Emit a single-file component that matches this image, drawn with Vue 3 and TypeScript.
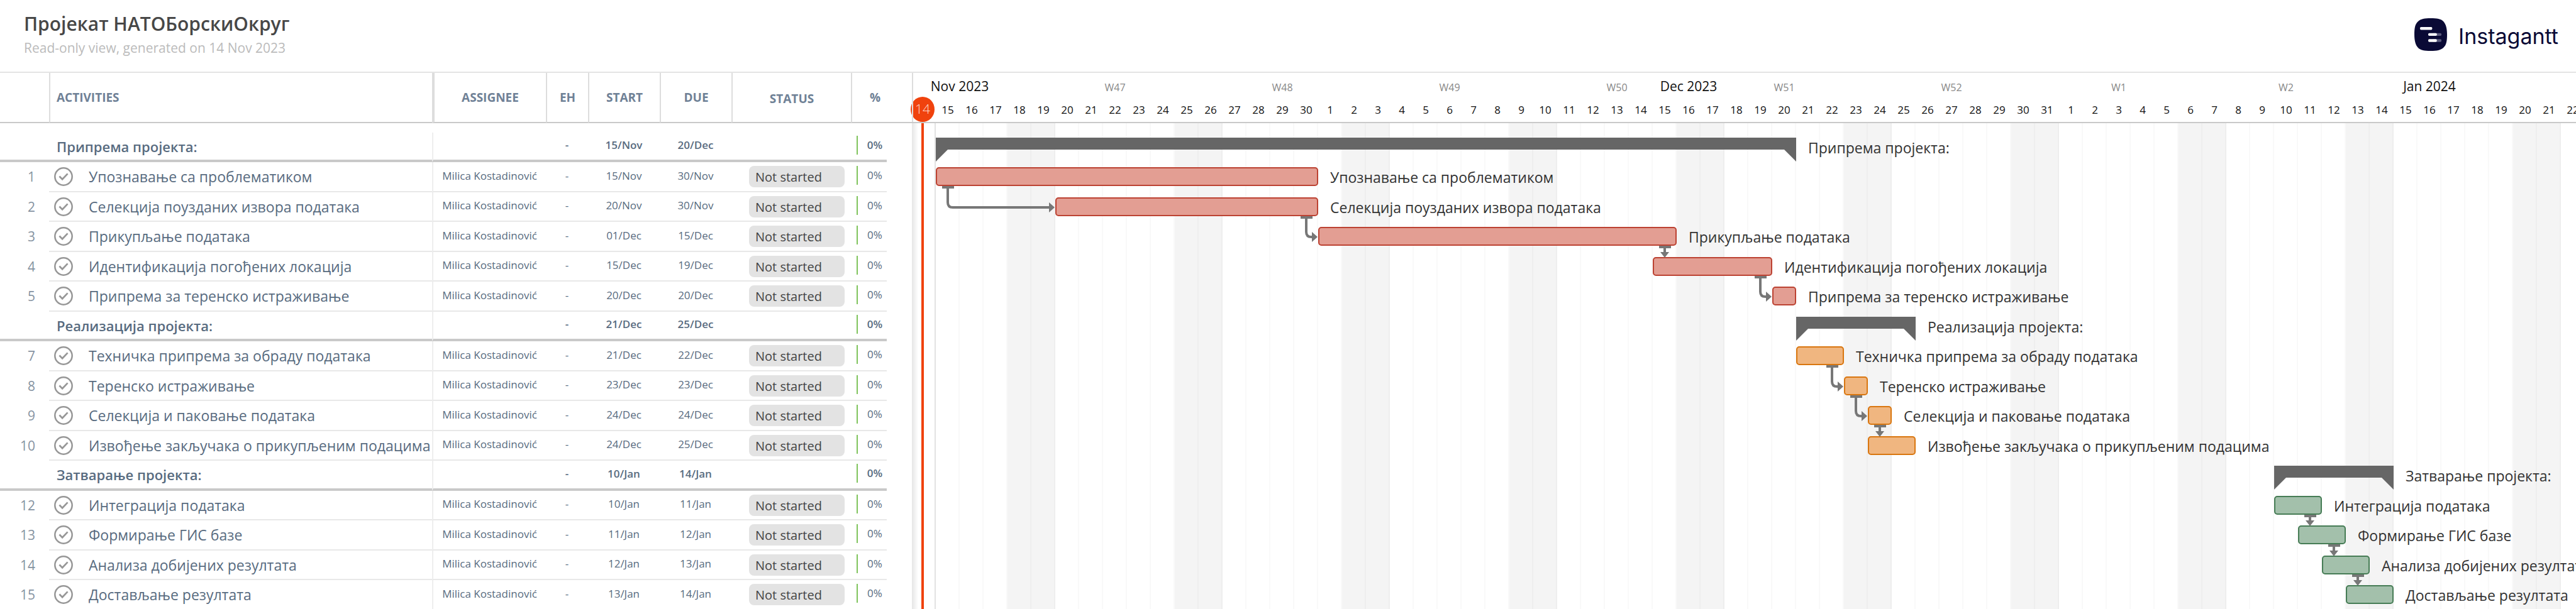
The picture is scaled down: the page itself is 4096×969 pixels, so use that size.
<script setup lang="ts">
type Tone = 'red' | 'orange' | 'green'

interface Row {
  num?: number
  name: string
  start: string
  due: string
  /** first day, counted from 14 Nov */
  from: number
  /** length in days */
  days: number
  tone?: Tone
}

interface Link {
  row: number
  day: number
  /** day the arrow runs to; left out when it drops straight down */
  to?: number
}

const DAY = 38
const ASSIGNEE = 'Milica Kostadinović'

const rows: Row[] = [
  { name: 'Припрема пројекта:', start: '15/Nov', due: '20/Dec', from: 1, days: 36 },
  { num: 1, name: 'Упознавање са проблематиком', start: '15/Nov', due: '30/Nov', from: 1, days: 16, tone: 'red' },
  { num: 2, name: 'Селекција поузданих извора података', start: '20/Nov', due: '30/Nov', from: 6, days: 11, tone: 'red' },
  { num: 3, name: 'Прикупљање података', start: '01/Dec', due: '15/Dec', from: 17, days: 15, tone: 'red' },
  { num: 4, name: 'Идентификација погођених локација', start: '15/Dec', due: '19/Dec', from: 31, days: 5, tone: 'red' },
  { num: 5, name: 'Припрема за теренско истраживање', start: '20/Dec', due: '20/Dec', from: 36, days: 1, tone: 'red' },
  { name: 'Реализација пројекта:', start: '21/Dec', due: '25/Dec', from: 37, days: 5 },
  { num: 7, name: 'Техничка припрема за обраду података', start: '21/Dec', due: '22/Dec', from: 37, days: 2, tone: 'orange' },
  { num: 8, name: 'Теренско истраживање', start: '23/Dec', due: '23/Dec', from: 39, days: 1, tone: 'orange' },
  { num: 9, name: 'Селекција и паковање података', start: '24/Dec', due: '24/Dec', from: 40, days: 1, tone: 'orange' },
  { num: 10, name: 'Извођење закључака о прикупљеним подацима', start: '24/Dec', due: '25/Dec', from: 40, days: 2, tone: 'orange' },
  { name: 'Затварање пројекта:', start: '10/Jan', due: '14/Jan', from: 57, days: 5 },
  { num: 12, name: 'Интеграција података', start: '10/Jan', due: '11/Jan', from: 57, days: 2, tone: 'green' },
  { num: 13, name: 'Формирање ГИС базе', start: '11/Jan', due: '12/Jan', from: 58, days: 2, tone: 'green' },
  { num: 14, name: 'Анализа добијених резултата', start: '12/Jan', due: '13/Jan', from: 59, days: 2, tone: 'green' },
  { num: 15, name: 'Достављање резултата', start: '13/Jan', due: '14/Jan', from: 60, days: 2, tone: 'green' },
]

const links: Link[] = [
  { row: 1, day: 1, to: 6 },
  { row: 2, day: 16, to: 17 },
  { row: 3, day: 31 },
  { row: 4, day: 35, to: 36 },
  { row: 7, day: 38, to: 39 },
  { row: 8, day: 39, to: 40 },
  { row: 9, day: 40 },
  { row: 12, day: 58 },
  { row: 13, day: 59 },
  { row: 14, day: 60 },
]

const days = Array.from({ length: 70 }, (_, i) => {
  const d = new Date(Date.UTC(2023, 10, 14 + i))
  return { index: i, date: d.getUTCDate(), weekend: d.getUTCDay() % 6 === 0 }
})

const months = [
  { label: 'Nov 2023', column: '1 / span 4' },
  { label: 'Dec 2023', column: '32 / span 3' },
  { label: 'Jan 2024', column: '63 / span 3' },
]

const weeks = ['W47', 'W48', 'W49', 'W50', 'W51', 'W52', 'W1', 'W2'].map((label, i) => ({
  label,
  column: `${8 + i * 7} / span 3`,
}))

// Rows alternate between 47px and 48px.
const rowTop = (i: number) => Math.floor(i / 2) * 95 + (i % 2) * 47

function linkShape(l: Link) {
  const x = l.day * DAY + 19
  const y = rowTop(l.row) + 38
  const next = rowTop(l.row + 1) + 8
  const base = `M${x - 9} ${y}h19v4h-19z`
  if (l.to === undefined) {
    return { line: `M${x} ${y}V${next - 6}`, solid: `${base}M${x - 7} ${next - 8}h14l-7 9z` }
  }
  const end = l.to * DAY - 2
  const mid = next + 16
  return {
    line: `M${x} ${y}V${mid - 8}Q${x} ${mid} ${x + 8} ${mid}H${end - 6}`,
    solid: `${base}M${end - 8} ${mid - 8}l9 8l-9 8z`,
  }
}
</script>

<template>
  <div class="app">
    <header class="top">
      <div>
        <h1>Пројекат НАТОБорскиОкруг</h1>
        <p>Read-only view, generated on 14 Nov 2023</p>
      </div>
      <a class="brand" href="#">
        <svg viewBox="0 0 55 55" aria-hidden="true">
          <path d="M27.500 0C38 0 45 1 49 5.500S55 17 55 27.500 54 45 49 49.500 38 55 27.500 55 10 54 6 49.500 0 38 0 27.500 1 10 6 5.500 17 0 27.500 0z" fill="#0a0a35" />
          <rect x="9.500" y="14.700" width="20.500" height="4.800" rx="1.800" fill="#fff" />
          <rect x="30" y="25" width="15.500" height="4.600" rx="1.800" fill="#5a5a7c" />
          <rect x="23.300" y="25" width="14.500" height="4.600" rx="1.800" fill="#fff" />
          <rect x="30" y="35.200" width="15.500" height="4.600" rx="1.800" fill="#5a5a7c" />
          <rect x="23.300" y="35.200" width="14.500" height="4.600" rx="1.800" fill="#fff" />
        </svg>
        <span>Instagantt</span>
      </a>
    </header>

    <main class="board">
      <table class="grid">
        <colgroup>
          <col class="c-num" /><col class="c-name" /><col class="c-who" /><col class="c-eh" />
          <col class="c-date" /><col class="c-date" /><col class="c-status" /><col class="c-pct" /><col />
        </colgroup>
        <thead>
          <tr>
            <th></th>
            <th class="h-name">ACTIVITIES</th>
            <th class="h-who">ASSIGNEE</th>
            <th>EH</th>
            <th>START</th>
            <th>DUE</th>
            <th class="h-status">STATUS</th>
            <th class="h-pct">%</th>
            <th class="h-end"></th>
          </tr>
        </thead>
        <tbody>
          <tr v-for="(r, i) in rows" :key="i" :class="{ section: !r.num }">
            <td class="num">{{ r.num }}</td>
            <td class="name">
              <div class="task">
                <button v-if="r.num" type="button" class="tick" :aria-label="'Complete: ' + r.name">
                  <svg viewBox="0 0 32 32" fill="none" stroke="#979797" aria-hidden="true">
                    <circle cx="16" cy="16" r="14.600" stroke-width="2.700" />
                    <path d="M9 15.500l5 5 9-9.500" stroke-width="2.900" />
                  </svg>
                </button>
                <span>{{ r.name }}</span>
              </div>
            </td>
            <td class="small who">{{ r.num ? ASSIGNEE : '' }}</td>
            <td class="small">-</td>
            <td class="small">{{ r.start }}</td>
            <td class="small">{{ r.due }}</td>
            <td class="status"><span v-if="r.num" class="pill">Not started</span></td>
            <td class="pct"><div class="progress">0%</div></td>
            <td class="end"></td>
          </tr>
        </tbody>
      </table>

      <section class="chart">
        <div class="scale">
          <div class="periods">
            <span v-for="m in months" :key="m.label" class="month" :style="{ gridColumn: m.column }">{{ m.label }}</span>
            <span v-for="w in weeks" :key="w.label" class="week" :style="{ gridColumn: w.column }">{{ w.label }}</span>
          </div>
          <div class="dates">
            <span v-for="d in days" :key="d.index" :class="{ today: d.index === 0 }">{{ d.date }}</span>
          </div>
        </div>
        <div class="canvas">
          <div class="stripes">
            <i v-for="d in days" :key="d.index" :class="{ off: d.weekend, now: d.index === 0 }"></i>
          </div>
          <div class="lanes">
            <div v-for="(r, i) in rows" :key="i" class="lane">
              <svg
                v-if="!r.tone"
                class="summary"
                :style="{ marginLeft: r.from * DAY + 'px' }"
                :width="r.days * DAY"
                height="38"
                aria-hidden="true"
              >
                <path :d="`M0 0H${r.days * DAY}V38L${r.days * DAY - 19} 19H19L0 38z`" fill="#666" />
              </svg>
              <div
                v-else
                class="bar"
                :class="r.tone"
                :style="{ marginLeft: r.from * DAY + 'px', width: r.days * DAY + 'px' }"
              ></div>
              <span class="label">{{ r.name }}</span>
            </div>
            <svg class="links" aria-hidden="true">
              <g v-for="(l, i) in links" :key="i">
                <path :d="linkShape(l).line" fill="none" stroke="#777" stroke-width="4" />
                <path :d="linkShape(l).solid" fill="#777" />
              </g>
            </svg>
          </div>
        </div>
      </section>
    </main>
  </div>
</template>

<style>
body {
  overflow: hidden;
}
</style>

<style scoped>
.app {
  height: 100vh;
  overflow: hidden;
  background: #fff;
  color: #333;
  font-family: "Open Sans", "Noto Sans", sans-serif;
  font-size: 23px;
}
.top {
  box-sizing: border-box;
  height: 116px;
  padding: 18px 28px 0 38px;
  border-bottom: 2px solid #e4e4e4;
  display: flex;
  justify-content: space-between;
}
h1 {
  margin: 0;
  font-size: 30px;
  line-height: 40px;
  font-weight: 600;
  color: #474747;
}
.top p {
  margin: 3px 0 0;
  font-size: 21px;
  line-height: 30px;
  color: #bbb;
}
.brand {
  display: flex;
  align-items: center;
  gap: 18px;
  height: 52px;
  margin-top: 11px;
  color: #0a0a35;
  text-decoration: none;
  font-family: Inter, sans-serif;
  font-size: 34px;
  font-weight: 400;
}
.brand svg {
  width: 52px;
  height: 52px;
}
.brand span {
  padding-top: 4px;
}
.board {
  display: flex;
  align-items: flex-start;
}
.grid {
  flex: none;
  width: 1450px;
  table-layout: fixed;
  border-collapse: separate;
  border-spacing: 0;
  color: #586b80;
}
.c-num { width: 78px; }
.c-name { width: 609px; }
.c-who { width: 181px; }
.c-eh { width: 67px; }
.c-date { width: 114px; }
.c-status { width: 190px; }
.c-pct { width: 57px; }
th,
td {
  box-sizing: border-box;
  padding: 0;
  text-align: center;
  vertical-align: middle;
  white-space: nowrap;
}
th {
  height: 80px;
  border-left: 2px solid #ddd;
  border-bottom: 2px solid #c9c9c9;
  font-size: 19px;
  font-weight: 700;
  color: #6f8196;
}
th:first-child,
th.h-end {
  border-left: 0;
}
th.h-name {
  padding-left: 10px;
  text-align: left;
}
th.h-who {
  border-left-width: 4px;
}
th.h-status {
  padding-top: 4px;
}
th.h-pct {
  padding-left: 18px;
}
tbody::before {
  content: "";
  display: block;
  height: 15px;
}
tbody tr:nth-child(odd) { height: 47px; }
tbody tr:nth-child(even) { height: 48px; }
td {
  border-bottom: 2px solid #e8e8e8;
}
td.num {
  padding-right: 22px;
  border-bottom-color: transparent;
  text-align: right;
  font-size: 21px;
  color: #8693a1;
}
td.end {
  border-bottom: 0;
}
.section td {
  border-bottom: 4px solid #c9c9c9;
  font-weight: 600;
}
.section td.end {
  border-bottom: 0;
}
.task {
  display: flex;
  align-items: center;
  gap: 22px;
  padding-left: 5px;
  line-height: 30px;
}
.section .task {
  padding-left: 12px;
  font-size: 22px;
}
.tick {
  display: block;
  width: 36px;
  height: 30px;
  padding: 0 3px;
  border: 0;
  background: none;
}
.tick svg {
  display: block;
  width: 30px;
  height: 30px;
}
.small {
  padding-bottom: 4px;
  font-size: 17px;
}
.who {
  border-left: 2px solid #eee;
}
.status {
  padding-left: 28px;
  text-align: left;
}
.pill {
  box-sizing: border-box;
  display: block;
  width: 152px;
  height: 34px;
  padding-left: 10px;
  border-radius: 8px;
  background: #e3e3e3;
  color: #444;
  font-size: 20px;
  line-height: 36px;
}
.pct {
  padding: 0 0 4px 9px;
}
.progress {
  padding-left: 8px;
  border-left: 2px solid #7fc35c;
  font-size: 17px;
  line-height: 30px;
}
.chart {
  position: relative;
  flex: 1;
  min-width: 0;
}
.chart::before {
  content: "";
  position: absolute;
  z-index: 2;
  top: 0;
  left: 0;
  width: 2px;
  height: 78px;
  background: #ddd;
}
.scale {
  box-sizing: border-box;
  height: 80px;
  border-bottom: 2px solid #c9c9c9;
}
.periods {
  display: grid;
  grid-template-columns: repeat(70, 38px);
  height: 38px;
  align-items: end;
  text-align: center;
  white-space: nowrap;
}
.periods span {
  grid-row: 1;
  line-height: 30px;
}
.month {
  font-size: 21px;
  color: #111;
  padding-bottom: 2px;
}
.week {
  font-size: 16px;
  color: #888;
}
.dates {
  display: flex;
  height: 40px;
}
.dates span {
  flex: none;
  width: 38px;
  text-align: center;
  font-size: 17px;
  line-height: 42px;
  color: #111;
}
.dates .today {
  margin: 0 2px 0 -2px;
  border-radius: 50%;
  background: #f0420d;
  color: #ffd9cb;
  font-size: 21px;
  font-weight: 300;
  line-height: 38px;
}
.canvas {
  position: relative;
  padding-top: 15px;
}
.stripes {
  position: absolute;
  inset: 0 auto 0 0;
  display: flex;
}
.stripes i {
  box-sizing: border-box;
  flex: none;
  width: 38px;
  border-right: 2px solid rgba(0, 0, 0, 0.024);
}
.stripes .off {
  background: #f4f4f4;
}
.stripes .now {
  padding-left: 15px;
  background: linear-gradient(to right, #e6e6e6, #fff 10px);
}
.stripes .now::before {
  content: "";
  display: block;
  width: 4px;
  height: 100%;
  background: #f0420d;
}
.lanes {
  position: relative;
}
.lane {
  display: flex;
  align-items: flex-start;
  height: 48px;
}
.lane:nth-child(odd) {
  height: 47px;
}
.bar,
.summary {
  flex: none;
  box-sizing: border-box;
  margin-top: 8px;
}
.bar {
  height: 30px;
  border: 2px solid;
  border-radius: 5px;
}
.red { background: #e39e93; border-color: #bc4232; }
.orange { background: #f0b680; border-color: #d9760f; }
.green { background: #a3c0ab; border-color: #467c55; }
.label {
  margin: 9px 0 0 19px;
  line-height: 30px;
  white-space: nowrap;
}
.links {
  position: absolute;
  inset: 0;
  width: 100%;
  height: 100%;
}
</style>
